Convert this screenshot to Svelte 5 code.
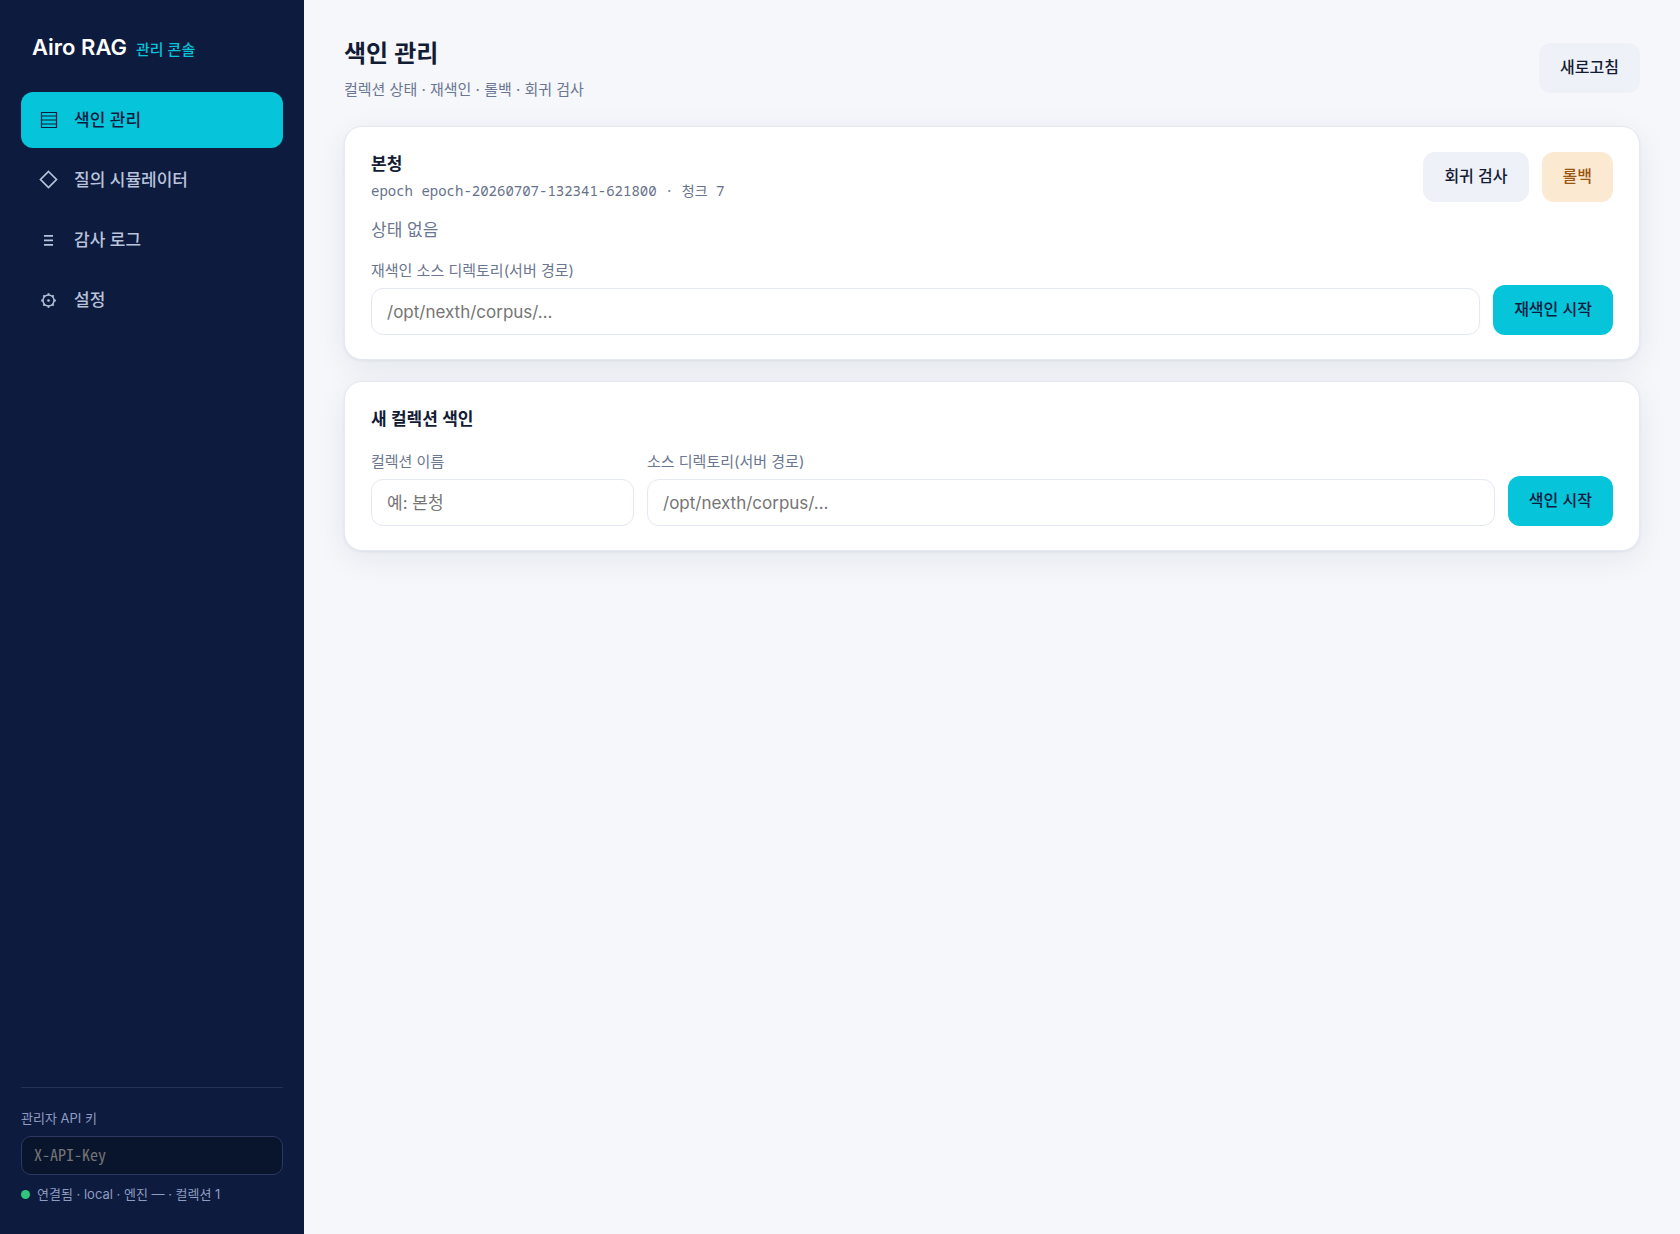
<script>
  const nav = [
    { id: 'index', label: '색인 관리' },
    { id: 'query', label: '질의 시뮬레이터' },
    { id: 'audit', label: '감사 로그' },
    { id: 'settings', label: '설정' }
  ];
  const teeth = [0, 45, 90, 135, 180, 225, 270, 315];
  let active = $state('index');
  let apiKey = $state('');
  let sourceDir = $state('');
  let newName = $state('');
  let newDir = $state('');
</script>

<div class="app">
  <aside class="sidebar">
    <div class="brand">
      <span class="brand-name">Airo RAG</span>
      <span class="brand-sub">관리 콘솔</span>
    </div>

    <nav>
      {#each nav as item (item.id)}
        <button
          type="button"
          class="nav-item"
          class:active={active === item.id}
          aria-current={active === item.id ? 'page' : undefined}
          onclick={() => (active = item.id)}
        >
          <svg viewBox="0 0 24 24" width="24" height="24" fill="none" stroke="currentColor" aria-hidden="true">
            {#if item.id === 'index'}
              <path d="M4.5 4.5h15v15h-15zM4.5 8h15M4.5 12h15M4.5 16h15" stroke-width="1.2" />
            {:else if item.id === 'query'}
              <path d="M11.5 3.5l8 8-8 8-8-8z" stroke-width="1.7" />
            {:else if item.id === 'audit'}
              <path d="M7 7.9h9M7 12.4h9M7 16.9h9" stroke-width="1.6" />
            {:else}
              <circle cx="11.5" cy="12.5" r="5.5" stroke-width="1.4" />
              <circle cx="11.5" cy="12.5" r="1.3" fill="currentColor" stroke="none" />
              {#each teeth as a (a)}
                <path d="M11.5 7V5.2" stroke-width="1.8" transform="rotate({a} 11.5 12.5)" />
              {/each}
            {/if}
          </svg>
          <span>{item.label}</span>
        </button>
      {/each}
    </nav>

    <div class="side-foot">
      <label for="api-key">관리자 API 키</label>
      <input id="api-key" class="key" type="text" placeholder="X-API-Key" bind:value={apiKey} />
      <p class="status"><span class="dot"></span>연결됨 · local · 엔진 — · 컬렉션 1</p>
    </div>
  </aside>

  <main>
    <header>
      <div>
        <h1>색인 관리</h1>
        <p class="subtitle">컬렉션 상태 · 재색인 · 롤백 · 회귀 검사</p>
      </div>
      <button type="button" class="btn ghost">새로고침</button>
    </header>

    <section class="card">
      <div class="card-head">
        <div>
          <h2>본청</h2>
          <p class="meta">epoch epoch-20260707-132341-621800 · 청크 7</p>
        </div>
        <div class="actions">
          <button type="button" class="btn ghost">회귀 검사</button>
          <button type="button" class="btn warn">롤백</button>
        </div>
      </div>
      <p class="state">상태 없음</p>
      <form class="row" onsubmit={(e) => e.preventDefault()}>
        <div class="field grow">
          <label for="source-dir">재색인 소스 디렉토리(서버 경로)</label>
          <input id="source-dir" type="text" placeholder="/opt/nexth/corpus/…" bind:value={sourceDir} />
        </div>
        <button type="submit" class="btn primary">재색인 시작</button>
      </form>
    </section>

    <section class="card">
      <h2>새 컬렉션 색인</h2>
      <form class="row new" onsubmit={(e) => e.preventDefault()}>
        <div class="field name">
          <label for="new-name">컬렉션 이름</label>
          <input id="new-name" type="text" placeholder="예: 본청" bind:value={newName} />
        </div>
        <div class="field grow">
          <label for="new-dir">소스 디렉토리(서버 경로)</label>
          <input id="new-dir" type="text" placeholder="/opt/nexth/corpus/…" bind:value={newDir} />
        </div>
        <button type="submit" class="btn primary">색인 시작</button>
      </form>
    </section>
  </main>
</div>

<style>
  :global(body) {
    background: #f5f7fb;
  }
  .app {
    display: flex;
    min-height: 100vh;
    font-family: Inter, 'Noto Sans CJK KR', sans-serif;
    font-size: 17px;
    line-height: 24px;
    color: #131c35;
  }
  .app * {
    box-sizing: border-box;
  }
  h1, h2, p {
    margin: 0;
  }
  button, input {
    font: inherit;
  }
  button {
    cursor: pointer;
  }

  .sidebar {
    flex: none;
    width: 304px;
    padding: 31px 21px 30px;
    display: flex;
    flex-direction: column;
    background: #0d1b3e;
    color: #b9c3dc;
  }
  .brand {
    display: flex;
    align-items: baseline;
    gap: 9px;
    padding: 0 11px;
    margin-bottom: 26px;
    line-height: 32px;
  }
  .brand-name {
    font-size: 22px;
    font-weight: 600;
    color: #fff;
  }
  .brand-sub {
    font-size: 15px;
    font-weight: 500;
    color: #06c4d9;
  }
  nav {
    display: flex;
    flex-direction: column;
    gap: 4px;
  }
  .nav-item {
    display: flex;
    align-items: center;
    gap: 13px;
    height: 56px;
    padding: 0 16px;
    border: 0;
    border-radius: 12px;
    background: none;
    color: inherit;
    font-weight: 500;
    text-align: left;
  }
  .nav-item.active {
    background: #06c4d9;
    color: #0d1b3e;
  }
  .side-foot {
    display: flex;
    flex-direction: column;
    margin-top: auto;
    padding-top: 20px;
    border-top: 1px solid #25325a;
    font-size: 13px;
    line-height: 20px;
    color: #8f9bc0;
  }
  .key {
    width: 100%;
    height: 39px;
    margin: 8px 0 9px;
    padding: 0 12px 3px;
    border: 1px solid #2a3862;
    border-radius: 10px;
    background: #09142d;
    color: #dfe5f5;
    font-family: 'Noto Sans Mono CJK KR', 'Liberation Mono', monospace;
    font-size: 16px;
    font-weight: 300;
  }
  .status {
    display: flex;
    align-items: center;
    gap: 7px;
  }
  .dot {
    width: 9px;
    height: 9px;
    border-radius: 50%;
    background: #2fc77c;
  }

  main {
    flex: 1;
    min-width: 0;
    padding: 34px 40px;
  }
  header {
    display: flex;
    align-items: center;
    justify-content: space-between;
    margin-bottom: 24px;
  }
  h1 {
    font-size: 24px;
    line-height: 40px;
    font-weight: 600;
  }
  .subtitle {
    margin-top: 4px;
    font-size: 15px;
    color: #6b7690;
  }
  .card {
    padding: 25px 26px 24px;
    border: 1px solid #e3e8f2;
    border-radius: 18px;
    background: #fff;
    box-shadow: 0 1px 3px rgba(13, 27, 62, 0.06), 0 8px 32px rgba(13, 27, 62, 0.07);
  }
  .card + .card {
    margin-top: 21px;
  }
  .card-head {
    display: flex;
    justify-content: space-between;
    align-items: flex-start;
  }
  h2 {
    font-size: 17px;
    line-height: 24px;
    font-weight: 600;
  }
  .meta {
    margin-top: 4px;
    font-family: 'Noto Sans Mono', 'DejaVu Sans Mono', 'Noto Sans CJK KR', monospace;
    font-size: 14px;
    line-height: 22px;
    color: #66718a;
  }
  .actions {
    display: flex;
    gap: 13px;
  }
  .state {
    margin-top: 16px;
    color: #6b7690;
  }
  .row {
    display: flex;
    align-items: flex-end;
    gap: 13px;
    margin-top: 19px;
  }
  .row.new {
    margin-top: 21px;
  }
  .field {
    display: flex;
    flex-direction: column;
    gap: 7px;
    font-size: 15px;
    line-height: 20px;
    color: #6b7690;
  }
  .grow {
    flex: 1;
    min-width: 0;
  }
  .name {
    width: 263px;
  }
  .field input {
    width: 100%;
    height: 47px;
    padding: 0 15px;
    border: 1px solid #e3e8f2;
    border-radius: 12px;
    background: #fff;
    color: #131c35;
    font-size: 17px;
  }
  .btn {
    flex: none;
    height: 50px;
    padding: 0 21px 2px;
    border: 0;
    border-radius: 12px;
    font-size: 16px;
    font-weight: 500;
  }
  .ghost {
    background: #eef1f8;
    color: #131c35;
  }
  .warn {
    background: #fce9d2;
    color: #9a5510;
  }
  .primary {
    background: #06c4d9;
    color: #0d1b3e;
  }
</style>
